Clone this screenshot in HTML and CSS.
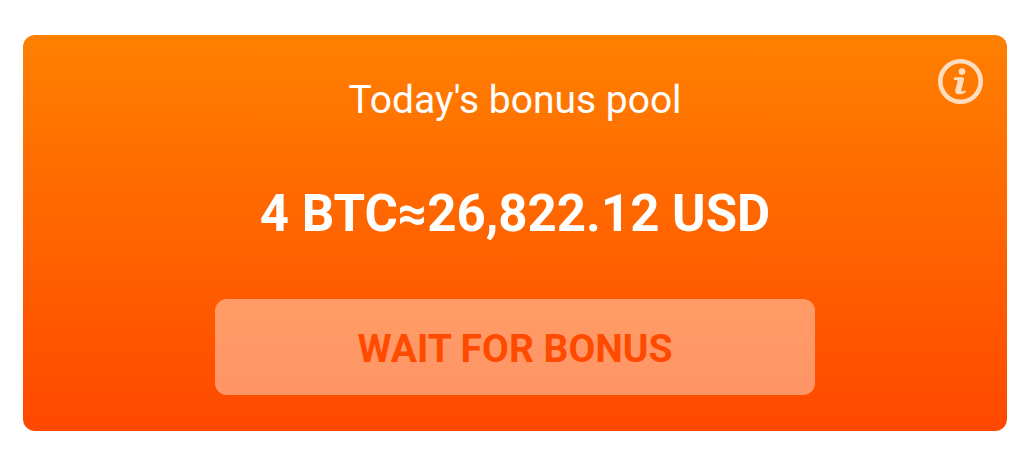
FILE: index.html
```html
<!DOCTYPE html>
<html lang="en">
<head>
<meta charset="utf-8">
<title>Bonus pool</title>
<link rel="stylesheet" href="styles.css">
</head>
<body>
<main class="pool-card">
  <button class="info-button" type="button" aria-label="About the bonus pool">
    <svg class="info-icon" viewBox="0 0 45 45" aria-hidden="true">
      <circle cx="22.500" cy="22.500" r="20.200" fill="none" stroke="currentColor" stroke-width="4.600"/>
      <circle cx="24" cy="12.600" r="3.300" fill="currentColor"/>
      <path d="M16.500 18.200H24.500Q26.500 18.200 26 20.500L23.500 30.500Q23 32.600 24.500 32.400L27.300 31.500Q28.500 31.800 27.800 33Q25.500 35.300 21.500 35.300Q16.400 35.200 17.300 31L19.600 22.500Q20 21 18.500 21L16.300 20.900Q14.800 19.500 16.500 18.200Z" fill="currentColor"/>
    </svg>
  </button>
  <h1 class="pool-title">Today's bonus pool</h1>
  <p class="pool-amount">4 BTC≈26,822.12 USD</p>
  <button class="wait-button" type="button">WAIT FOR BONUS</button>
</main>
</body>
</html>
```
FILE: styles.css
```css
* { box-sizing: border-box; }
body {
  margin: 0;
  padding: 35px 24px 24px 23px;
  background: #fff;
  font-family: Roboto, sans-serif;
}
.pool-card {
  position: relative;
  display: flex;
  flex-direction: column;
  align-items: center;
  padding: 41px 24px 36px;
  border-radius: 12px;
  background: linear-gradient(#ff8000, #ff4800);
  color: #fff;
  text-align: center;
}
.info-button {
  position: absolute;
  top: 24px;
  right: 24px;
  padding: 0;
  border: 0;
  background: none;
  color: rgba(255, 255, 255, 0.75);
}
.info-icon {
  display: block;
  width: 45px;
  height: 45px;
}
.pool-title {
  margin: 0;
  font-size: 39px;
  line-height: 48px;
  font-weight: 400;
}
.pool-amount {
  margin: 60px 0 55px;
  font-size: 51px;
  line-height: 60px;
  font-weight: 700;
}
.wait-button {
  width: 600px;
  max-width: 100%;
  height: 96px;
  padding: 4px 0 0;
  border: 0;
  border-radius: 12px;
  background: rgba(255, 255, 255, 0.4);
  color: #ff4b00;
  font-family: inherit;
  font-size: 39px;
  font-weight: 700;
}
```
